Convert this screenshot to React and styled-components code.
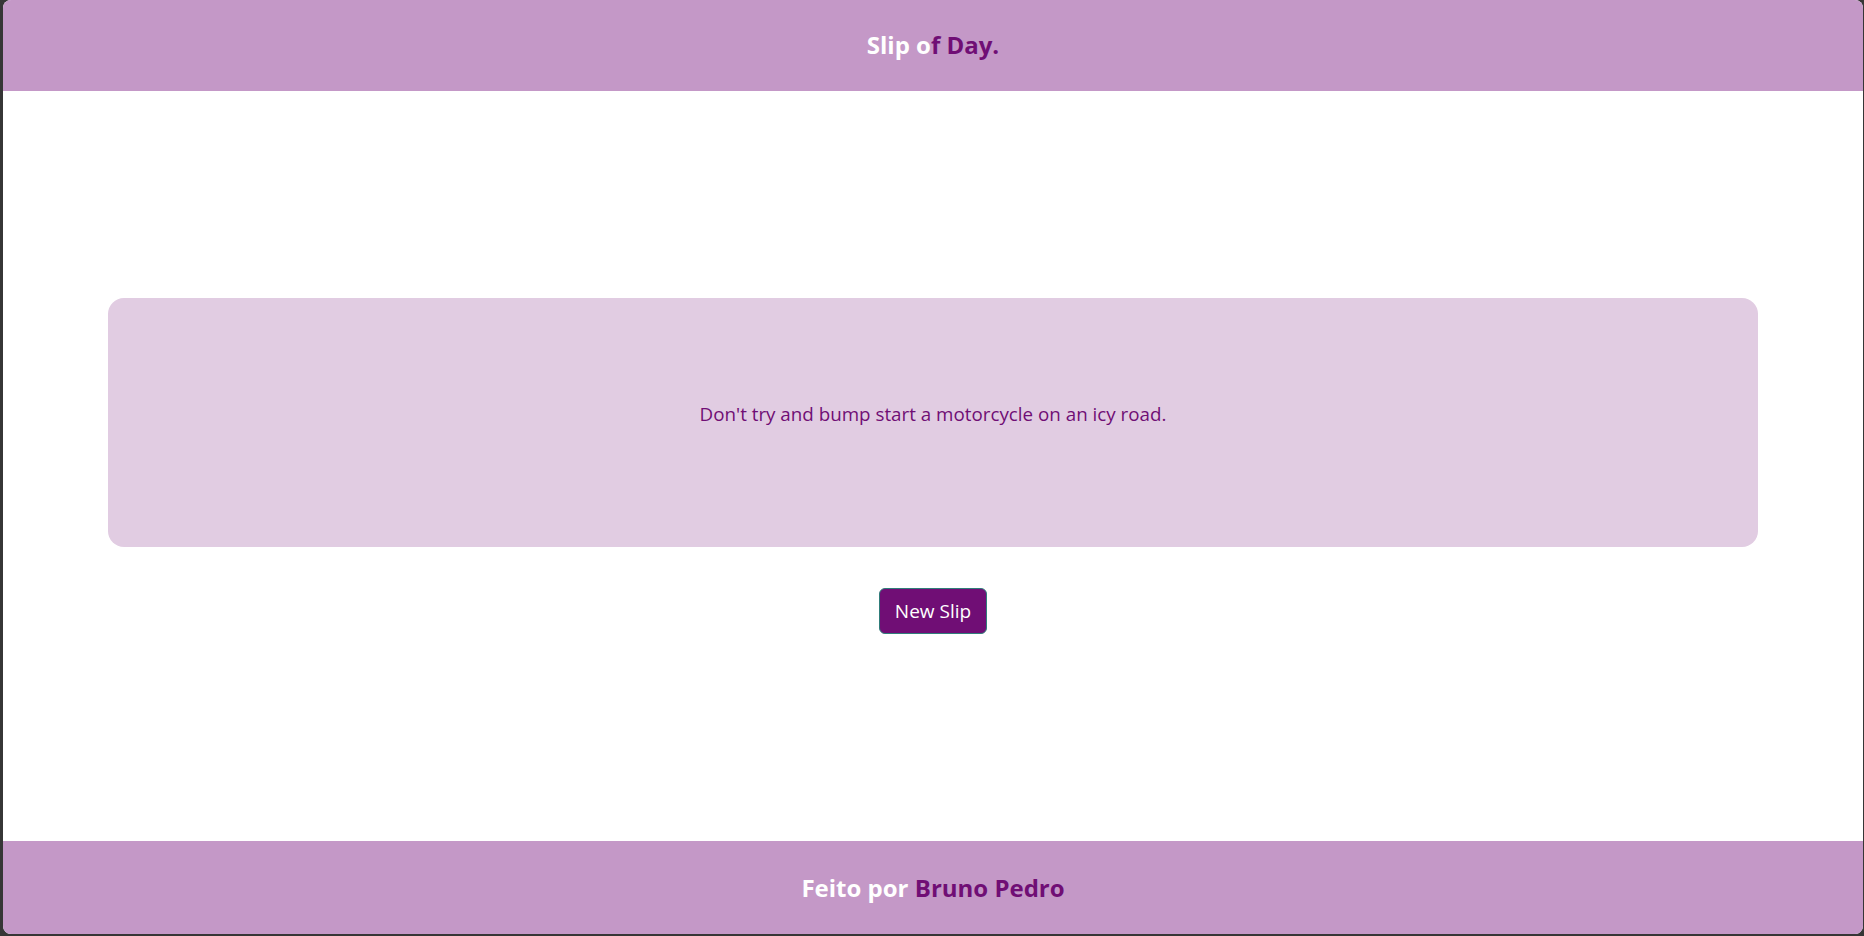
import React, { useState } from 'react';
import styled, { createGlobalStyle } from 'styled-components';

const GlobalStyle = createGlobalStyle`
  html, body {
    margin: 0;
    padding: 0;
    background: #363636;
  }
  body {
    font-family: 'Open Sans', 'Noto Sans', sans-serif;
  }
`;

const Window = styled.div`
  margin: 0 1px 0 3px;
  height: 934px;
  display: flex;
  flex-direction: column;
  background: #ffffff;
  border-radius: 8px;
  overflow: hidden;
`;

const Bar = styled.div`
  height: ${(p) => p.height}px;
  flex-shrink: 0;
  display: flex;
  align-items: center;
  justify-content: center;
  padding-bottom: ${(p) => p.lift || 0}px;
  box-sizing: border-box;
  background: #c498c7;
  color: #ffffff;
  font-size: 24px;
  font-weight: 700;
`;

const Accent = styled.span`
  color: #700e75;
`;

const Main = styled.main`
  flex: 1;
  display: flex;
  flex-direction: column;
  align-items: center;
  justify-content: center;
  gap: 41px;
  padding: 0 105px;
`;

const Card = styled.div`
  align-self: stretch;
  height: 249px;
  display: flex;
  align-items: center;
  justify-content: center;
  background: #e1cce2;
  border-radius: 16px;
  color: #700e75;
  font-size: 18.8px;
`;

const Quote = styled.p`
  margin: 0 0 18px;
`;

const Button = styled.button`
  width: 108px;
  height: 46px;
  background: #700e75;
  color: #ffffff;
  border: 1px solid #2f7d7a;
  border-radius: 6px;
  font-family: 'Open Sans', 'Noto Sans', sans-serif;
  font-size: 19px;
  cursor: pointer;
`;

const slips = [
  "Don't try and bump start a motorcycle on an icy road.",
  'Always do anything for love, but not that.',
  'Never cover a hot dish with clingfilm.',
];

export default function App() {
  const [index, setIndex] = useState(0);

  return (
    <>
      <GlobalStyle />
      <Window>
        <Bar height={91} lift={2}>
          <span>
            Slip o<Accent>f Day.</Accent>
          </span>
        </Bar>
        <Main>
          <Card>
            <Quote>{slips[index]}</Quote>
          </Card>
          <Button onClick={() => setIndex((index + 1) % slips.length)}>New Slip</Button>
        </Main>
        <Bar height={93}>
          <span>
            Feito por <Accent>Bruno Pedro</Accent>
          </span>
        </Bar>
      </Window>
    </>
  );
}
